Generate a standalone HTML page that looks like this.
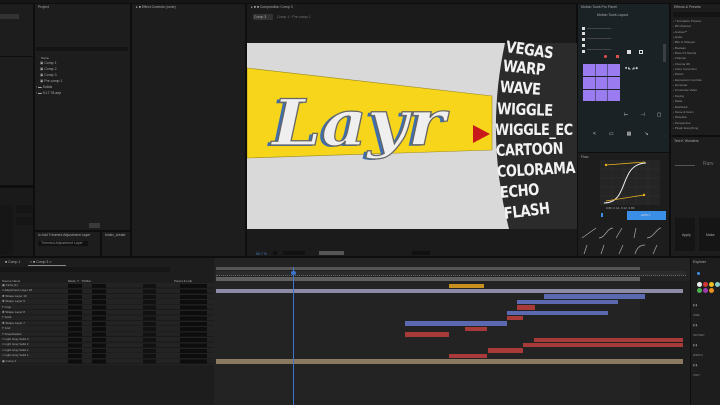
<!DOCTYPE html>
<html><head><meta charset="utf-8"><style>
*{margin:0;padding:0;box-sizing:border-box}
body{width:720px;height:405px;background:#0e0e0e;position:relative;overflow:hidden;font-family:"Liberation Sans",sans-serif;color:#9a9a9a;font-size:3px}
.a{position:absolute}
.p{position:absolute;background:#1d1d1d}
.t{position:absolute;font-size:3.5px;color:#aaa;white-space:nowrap}
.bar{position:absolute;height:4.6px}
.w{position:absolute;left:500px;font-family:"DejaVu Sans","Liberation Sans",sans-serif;font-weight:bold;color:#f2f2f2;font-size:16px;letter-spacing:-0.5px;line-height:1;transform-origin:left center;white-space:nowrap}
</style></head><body>
<div class="a" style="left:0;top:0;width:720px;height:3px;background:#161616"></div>
<div class="p" style="left:0;top:4px;width:33px;height:52px"></div>
<div class="a" style="left:0;top:14px;width:19px;height:5px;background:#333"></div>
<div class="p" style="left:0;top:57px;width:33px;height:128px"></div>
<div class="p" style="left:0;top:188px;width:33px;height:68px;background:#1a1a1a"></div>
<div class="a" style="left:0;top:205px;width:13px;height:50px;background:#161616"></div>
<div class="a" style="left:16px;top:205px;width:17px;height:8px;background:#151515"></div>
<div class="a" style="left:16px;top:217px;width:17px;height:8px;background:#151515"></div>
<div class="p" style="left:35px;top:4px;width:95px;height:226px"></div>
<div class="t" style="left:38px;top:5px">Project</div>
<div class="a" style="left:36px;top:47px;width:92px;height:4px;background:#141414"></div>
<div class="t" style="left:41px;top:56px;font-size:3px">Name</div>
<div class="t" style="left:40px;top:61px">▣ Comp 1</div>
<div class="t" style="left:40px;top:67px">▣ Comp 2</div>
<div class="t" style="left:40px;top:73px">▣ Comp 3</div>
<div class="t" style="left:40px;top:79px">▣ Pre-comp 1</div>
<div class="t" style="left:36px;top:85px">› ▬ Solids</div>
<div class="t" style="left:36px;top:91px">› ▬ 9:17:78.aep</div>
<div class="a" style="left:89px;top:223px;width:11px;height:5px;background:#3a3a3a"></div>
<div class="p" style="left:35px;top:232px;width:65px;height:24px"></div>
<div class="t" style="left:38px;top:233px">Ix Add Trimmed Adjustment Layer</div>
<div class="a" style="left:38px;top:241px;width:50px;height:5px;background:#111"></div>
<div class="t" style="left:41px;top:241px;color:#888">Trimmed Adjustment Layer</div>
<div class="p" style="left:102px;top:232px;width:28px;height:24px"></div>
<div class="t" style="left:105px;top:233px">folder_create</div>
<div class="p" style="left:132px;top:4px;width:113px;height:252px"></div>
<div class="t" style="left:136px;top:5px">▸ ■ Effect Controls (none)</div>
<div class="p" style="left:247px;top:4px;width:329px;height:252px;background:#1b1b1b"></div>
<div class="t" style="left:251px;top:5px">▸ ■ ■ Composition Comp 3</div>
<div class="a" style="left:253px;top:14px;width:20px;height:6px;background:#333"></div>
<div class="t" style="left:254px;top:15px">Comp 3</div>
<div class="t" style="left:277px;top:15px;color:#777">Comp 1 › Pre-comp 1</div>
<svg class="a" style="left:247px;top:43px" width="330" height="186" viewBox="0 0 330 186">
<rect width="330" height="186" fill="#d9d9d9"/>
<polygon points="0,25 245,53 245,107 0,115" fill="#f6d51a" stroke="#9a8a20" stroke-width="0.6"/>
<path d="M258,0 Q238,92 262,186 L330,186 L330,0 Z" fill="#2b2b2b"/>
<polygon points="226,82 243,91 226,100" fill="#c81a1a"/>
</svg>
<div class="a" style="left:272px;top:92px;font-family:'DejaVu Serif','Liberation Serif',serif;font-weight:bold;font-style:italic;font-size:64px;color:#efefef;line-height:1;transform:scaleX(1.1);transform-origin:left top;-webkit-text-stroke:1.2px #666;text-shadow:-3px 1px 0 #3d6fb0">Layr</div>
<div class="w" style="top:39px;left:506px;transform:rotate(8deg) scaleX(0.82)">VEGAS</div>
<div class="w" style="top:58px;left:503px;transform:rotate(6deg) scaleX(0.82)">WARP</div>
<div class="w" style="top:79px;left:500px;transform:rotate(4deg) scaleX(0.82)">WAVE</div>
<div class="w" style="top:101px;left:497px;transform:rotate(2deg) scaleX(0.82)">WIGGLE</div>
<div class="w" style="top:122px;left:495px;transform:scaleX(0.8)">WIGGLE_EC</div>
<div class="w" style="top:143px;left:496px;transform:rotate(-2deg) scaleX(0.8)">CARTOON</div>
<div class="w" style="top:164px;left:497px;transform:rotate(-3deg) scaleX(0.8)">COLORAMA</div>
<div class="w" style="top:185px;left:500px;transform:rotate(-5deg) scaleX(0.82)">ECHO</div>
<div class="w" style="top:206px;left:504px;transform:rotate(-7deg) scaleX(0.82)">FLASH</div>
<div class="a" style="left:247px;top:229px;width:330px;height:27px;background:#1b1b1b"></div>
<div class="t" style="left:256px;top:252px;color:#4a7fc8">50.7 %</div>
<div class="a" style="left:273px;top:251px;width:4px;height:4px;background:#111"></div>
<div class="a" style="left:283px;top:251px;width:22px;height:4px;background:#111"></div>
<div class="a" style="left:319px;top:251px;width:25px;height:4px;background:#555"></div>
<div class="a" style="left:412px;top:251px;width:18px;height:4px;background:#111"></div>
<div class="p" style="left:578px;top:4px;width:91px;height:148px;background:#1b2225"></div>
<div class="t" style="left:581px;top:5px">Motion Tools Pro Panel</div>
<div class="t" style="left:597px;top:13px">Motion Tools Layout</div>
<div class="a" style="left:582px;top:27px;width:1px;height:26px;border-left:3px dotted #ddd"></div>
<div class="a" style="left:587px;top:28px;width:24px;height:1px;background:#444"></div>
<div class="a" style="left:587px;top:38px;width:24px;height:1px;background:#444"></div>
<div class="a" style="left:587px;top:49px;width:24px;height:1px;background:#444"></div>
<div class="a" style="left:604px;top:55px;width:3px;height:3px;background:#e05050;border-radius:2px"></div>
<div class="a" style="left:616px;top:55px;width:3px;height:3px;background:#e05050"></div>
<div class="a" style="left:627px;top:50px;width:4px;height:4px;background:#ddd"></div>
<div class="a" style="left:639px;top:50px;width:4px;height:4px;border:1px solid #ddd"></div>
<div class="a" style="left:583px;top:64px;width:37px;height:37px;background:repeating-linear-gradient(90deg,#9a7cf0 0 12px,#1b2225 12px 12.5px),#9a7cf0"></div>
<div class="a" style="left:583px;top:76px;width:37px;height:0.6px;background:#1b2225"></div>
<div class="a" style="left:583px;top:88.5px;width:37px;height:0.6px;background:#1b2225"></div>
<div class="t" style="left:625px;top:66px;color:#ccc">■ ◣ ◢ ◆</div>
<div class="t" style="left:624px;top:112px;color:#ccc;font-size:5px;letter-spacing:12px">⊢⊣▢⊂</div>
<div class="t" style="left:593px;top:131px;color:#ccc;font-size:5px;letter-spacing:13px">&lt;▭▦↘</div>
<div class="a" style="left:663px;top:44px;width:3px;height:18px;background:#3a3f42"></div>
<div class="p" style="left:578px;top:153px;width:91px;height:103px"></div>
<div class="t" style="left:581px;top:155px">Flow</div>
<svg class="a" style="left:600px;top:160px" width="60" height="45" viewBox="0 0 60 45">
<rect x="0" y="0" width="60" height="45" fill="#252525"/>
<g stroke="#333" stroke-width="0.4"><path d="M12,0V45M24,0V45M36,0V45M48,0V45M0,9H60M0,18H60M0,27H60M0,36H60"/></g>
<path d="M4,43 C30,43 18,4 46,3" stroke="#eee" stroke-width="1" fill="none"/>
<path d="M6,5 L45,2 M6,41 L44,35" stroke="#e8b020" stroke-width="0.8"/>
<circle cx="6" cy="5" r="1.2" fill="#e8b020"/><circle cx="44" cy="35" r="1.2" fill="#e8b020"/>
</svg>
<div class="t" style="left:606px;top:206px;font-size:3px">0.80, 0.14, 0.12, 0.86</div>
<div class="a" style="left:627px;top:211px;width:39px;height:9px;background:#3a8ee6"></div>
<div class="t" style="left:641px;top:213px;color:#ddd;font-size:3px">APPLY</div>
<div class="a" style="left:601px;top:213px;width:2px;height:4px;background:#3a8ee6"></div>
<svg class="a" style="left:579px;top:225px" width="88" height="30"><g stroke="#aaa" stroke-width="0.7" fill="none">
<path d="M3,13L17,3M20,13C26,13 28,3 34,3M37,13L43,3M55,13L57,3M68,13C74,13 78,3 82,3M5,29L8,20M22,29L25,20M40,29L44,20M56,29C58,22 62,20 66,20M74,29L78,20"/></g></svg>
<div class="p" style="left:671px;top:4px;width:49px;height:131px"></div>
<div class="t" style="left:674px;top:5px">Effects &amp; Presets</div>
<div class="a" style="left:673px;top:12px;width:47px;height:5px;background:#141414"></div>
<div class="t" style="left:673px;top:19px;font-size:3px;line-height:5.35px;color:#999">› * Animation Presets<br>› 3D Channel<br>› Andrew**<br>› Audio<br>› Blur &amp; Sharpen<br>› Boolean<br>› Boris FX Mocha<br>› Channel<br>› Cinema 4D<br>› Color Correction<br>› Distort<br>› Expression Controls<br>› Generate<br>› Immersive Video<br>› Keying<br>› Matte<br>› RedGiant<br>› Noise &amp; Grain<br>› Obsolete<br>› Perspective<br>› Plugin Everything</div>
<div class="p" style="left:671px;top:137px;width:49px;height:119px"></div>
<div class="t" style="left:674px;top:139px">Text K Wonders</div>
<div class="t" style="left:703px;top:161px;color:#777;font-size:5px">Rarv</div>
<div class="a" style="left:675px;top:165px;width:20px;height:1px;background:#555"></div>
<div class="a" style="left:675px;top:218px;width:20px;height:33px;background:#151515"></div>
<div class="a" style="left:699px;top:218px;width:21px;height:33px;background:#151515"></div>
<div class="t" style="left:682px;top:233px">Apply</div><div class="t" style="left:706px;top:233px">Make</div>
<div class="a" style="left:0;top:258px;width:690px;height:147px;background:#1d1d1d"></div>
<div class="t" style="left:5px;top:260px">■ Comp 1</div>
<div class="t" style="left:30px;top:260px">× ■ Comp 3 ≡</div>
<div class="a" style="left:28px;top:265px;width:38px;height:1px;background:#888"></div>
<div class="a" style="left:0;top:267px;width:170px;height:5px;background:#161616"></div>
<div class="t" style="left:2px;top:279px;font-size:3px">Source Name</div>
<div class="t" style="left:68px;top:279px;font-size:3px">Mode &nbsp;T &nbsp; TrkMat</div>
<div class="t" style="left:174px;top:279px;font-size:3px">Parent &amp; Link</div>
<div class="a" style="left:214px;top:258px;width:476px;height:147px;background:#232323"></div>
<div class="a" style="left:216px;top:267px;width:424px;height:3px;background:#555"></div>
<div class="a" style="left:216px;top:271px;width:470px;height:5px;background:#2b2b2b;border-bottom:1px dotted #666"></div>
<div class="a" style="left:216px;top:277px;width:424px;height:4px;background:#616161"></div>
<div class="a" style="left:640px;top:281px;width:50px;height:124px;background:#1e1e1e"></div>
<div class="bar" style="left:449px;top:283.5px;width:35px;background:#c8901e"></div>
<div class="bar" style="left:216px;top:288.9px;width:467px;background:#8c8ca6"></div>
<div class="bar" style="left:544px;top:294.3px;width:101px;background:#5b6ab0"></div>
<div class="bar" style="left:517px;top:299.7px;width:101px;background:#5b6ab0"></div>
<div class="bar" style="left:517px;top:305.1px;width:18px;background:#a83a3a"></div>
<div class="bar" style="left:507px;top:310.5px;width:101px;background:#5b6ab0"></div>
<div class="bar" style="left:507px;top:315.9px;width:16px;background:#a83a3a"></div>
<div class="bar" style="left:405px;top:321.3px;width:102px;background:#5b6ab0"></div>
<div class="bar" style="left:465px;top:326.7px;width:22px;background:#a83a3a"></div>
<div class="bar" style="left:405px;top:332.1px;width:44px;background:#a83a3a"></div>
<div class="bar" style="left:534px;top:337.5px;width:149px;background:#a83a3a"></div>
<div class="bar" style="left:523px;top:342.9px;width:160px;background:#a83a3a"></div>
<div class="bar" style="left:488px;top:348.3px;width:35px;background:#a83a3a"></div>
<div class="bar" style="left:449px;top:353.7px;width:38px;background:#a83a3a"></div>
<div class="bar" style="left:216px;top:359.1px;width:467px;background:#8a7a62"></div>
<div class="a" style="left:293px;top:267px;width:1px;height:138px;background:#3b74c9"></div>
<div class="a" style="left:291px;top:271px;width:5px;height:4px;background:#3b74c9;border-radius:2px"></div>
<div class="a" style="left:0;top:283px;width:214px;height:82px;background:repeating-linear-gradient(180deg,#232323 0 4.6px,#1a1a1a 4.6px 5.4px)"></div>
<div class="t" style="left:2px;top:283px;font-size:3px;line-height:5.4px;color:#aaa">▣ Circle [1]<br>□ Adjustment Layer 18<br>✱ Shape Layer 10<br>✱ Shape Layer 9<br>T Crop<br>✱ Shape Layer 8<br>T Solid<br>✱ Shape Layer 7<br>T Grid<br>T Dropshadow<br>□ Light Gray Solid 3<br>□ Light Gray Solid 2<br>□ Light Gray Solid 1<br>□ Light Gray Solid 1<br>▣ Comp 1</div>
<div class="a" style="left:68px;top:284px;width:14px;height:80px;background:repeating-linear-gradient(180deg,#0d0d0d 0 4px,transparent 4px 5.4px)"></div>
<div class="a" style="left:92px;top:284px;width:14px;height:80px;background:repeating-linear-gradient(180deg,#0d0d0d 0 4px,transparent 4px 5.4px)"></div>
<div class="a" style="left:143px;top:284px;width:13px;height:80px;background:repeating-linear-gradient(180deg,#111 0 4px,transparent 4px 5.4px)"></div>
<div class="a" style="left:180px;top:284px;width:27px;height:80px;background:repeating-linear-gradient(180deg,#0d0d0d 0 4px,transparent 4px 5.4px)"></div>
<div class="a" style="left:0;top:365px;width:214px;height:40px;background:#1d1d1d"></div>
<div class="p" style="left:691px;top:258px;width:29px;height:147px"></div>
<div class="t" style="left:693px;top:260px">Explorer</div>
<div class="a" style="left:697px;top:282px;width:5px;height:5px;border-radius:3px;background:#eee"></div>
<div class="a" style="left:703px;top:282px;width:5px;height:5px;border-radius:3px;background:#d03838"></div>
<div class="a" style="left:709px;top:282px;width:5px;height:5px;border-radius:3px;background:#e8c020"></div>
<div class="a" style="left:715px;top:282px;width:5px;height:5px;border-radius:3px;background:#8cc"></div>
<div class="a" style="left:697px;top:288px;width:5px;height:5px;border-radius:3px;background:#4caf50"></div>
<div class="a" style="left:703px;top:288px;width:5px;height:5px;border-radius:3px;background:#9c3cb0"></div>
<div class="a" style="left:709px;top:288px;width:5px;height:5px;border-radius:3px;background:#e89020"></div>
<div class="a" style="left:697px;top:272px;width:3px;height:3px;border-radius:2px;background:#3b8ee6"></div>
<div class="t" style="left:693px;top:300px;font-size:3px;line-height:10px;color:#888">▮ ▮<br>SIZE<br>▮ ▮<br>OFFSET<br>▮ ▮<br>WIDTH<br>▮ ▮<br>UNIT</div>
</body></html>
